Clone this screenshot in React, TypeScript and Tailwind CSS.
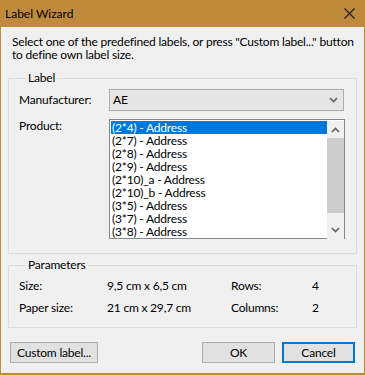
import React from "react";

const items = [
  "(2*4) - Address",
  "(2*7) - Address",
  "(2*8) - Address",
  "(2*9) - Address",
  "(2*10)_a - Address",
  "(2*10)_b - Address",
  "(3*5) - Address",
  "(3*7) - Address",
  "(3*8) - Address",
];

function Chevron({ up }: { up?: boolean }) {
  return (
    <svg width="9" height="6" viewBox="0 0 9 6" className="block">
      {up ? (
        <path d="M1 5 L4.5 1.5 L8 5" fill="none" stroke="#606060" strokeWidth="1.6" />
      ) : (
        <path d="M1 1 L4.5 4.5 L8 1" fill="none" stroke="#606060" strokeWidth="1.6" />
      )}
    </svg>
  );
}

export default function App() {
  return (
    <div
      className="w-[365px] h-[375px] bg-[#bf8a3c] flex flex-col text-[12px] tracking-[-0.2px] text-black overflow-hidden"
      style={{ fontFamily: 'Lato, "Liberation Sans", sans-serif' }}
    >
      {/* Title bar */}
      <div className="h-[27px] shrink-0 flex items-center justify-between pl-[5px] pr-[10px]">
        <span className="text-[12px] tracking-normal leading-none">Label Wizard</span>
        <svg width="11" height="11" viewBox="0 0 11 11" className="block">
          <path d="M0.5 0.5 L10.5 10.5 M10.5 0.5 L0.5 10.5" stroke="#1a1a1a" strokeWidth="1.1" />
        </svg>
      </div>
      {/* Body */}
      <div className="flex-1 mx-[1px] mb-[2px] bg-[#f0f0f0] flex flex-col px-[7px]">
        <p className="mt-[8px] pl-[4px] leading-[13px] whitespace-nowrap">
          Select one of the predefined labels, or press "Custom label..." button
          <br />
          to define own label size.
        </p>

        <fieldset className="mt-[9px] border border-[#dcdcdc] h-[184px] px-[10px]">
          <legend className="ml-[7px] px-[2px] leading-[16px]">Label</legend>
          <div className="flex items-center mt-[3px]">
            <span className="w-[90px] shrink-0">Manufacturer:</span>
            <div className="w-[235px] h-[22px] bg-[#e5e5e5] border border-[#adadad] flex items-center justify-between pl-[3px] pr-[5px]">
              <span>AE</span>
              <Chevron />
            </div>
          </div>
          <div className="flex mt-[8px]">
            <span className="w-[90px] shrink-0 leading-[14px]">Product:</span>
            <div className="w-[236px] h-[120px] bg-white border border-[#828790] flex pl-[1px] pt-[1px]">
              <div className="w-[216px] flex flex-col">
                {items.map((t, i) => (
                  <div
                    key={t}
                    className={
                      "h-[13px] leading-[13px] pl-[1px] whitespace-pre " +
                      (i === 0 ? "bg-[#0078d7] text-white" : "")
                    }
                  >
                    {t}
                  </div>
                ))}
              </div>
              <div className="w-[17px] ml-auto h-[118px] bg-[#f0f0f0] flex flex-col items-center">
                <div className="h-[17px] w-full flex items-center justify-center">
                  <Chevron up />
                </div>
                <div className="w-full h-[75px] bg-[#cdcdcd]" />
                <div className="flex-1 w-full flex items-end justify-center pb-[6px]">
                  <Chevron />
                </div>
              </div>
            </div>
          </div>
        </fieldset>

        <fieldset className="mt-[3px] border border-[#dcdcdc] h-[71px] px-[10px]">
          <legend className="ml-[7px] px-[2px] leading-[16px]">Parameters</legend>
          <div className="grid grid-cols-[88px_124px_81px_auto] gap-y-[6px] mt-[5px] leading-[16px]">
            <span>Size:</span>
            <span>9,5 cm x 6,5 cm</span>
            <span>Rows:</span>
            <span>4</span>
            <span>Paper size:</span>
            <span>21 cm x 29,7 cm</span>
            <span>Columns:</span>
            <span>2</span>
          </div>
        </fieldset>

        <div className="flex mt-[14px] pl-[2px] pr-[2px]">
          <button className="w-[88px] h-[21px] bg-[#e1e1e1] border border-[#adadad] leading-none">
            Custom label...
          </button>
          <button className="ml-auto w-[73px] h-[21px] bg-[#e1e1e1] border border-[#adadad] leading-none">
            OK
          </button>
          <button className="ml-[7px] w-[73px] h-[21px] bg-[#e1e1e1] border-2 border-[#0078d7] leading-none">
            Cancel
          </button>
        </div>
      </div>
    </div>
  );
}
